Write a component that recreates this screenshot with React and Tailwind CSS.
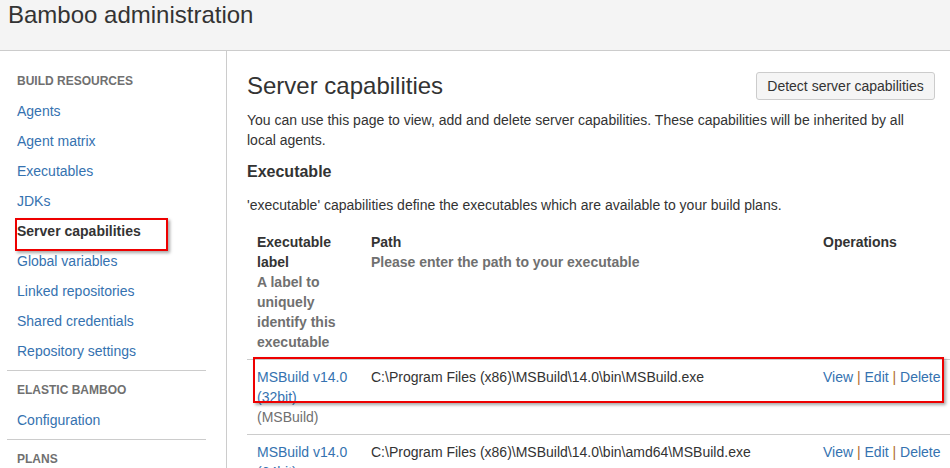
import React from "react";

const navLink = "h-[30px] flex items-center pl-[10px] text-[14px] text-[#3572b0]";
const navHead = "h-[30px] flex items-center pl-[10px] text-[12px] font-bold text-[#707070] uppercase";

function Sep() {
  return <span className="text-[#b06a2a]"> | </span>;
}

function Ops() {
  return (
    <span className="text-[#3572b0] whitespace-nowrap">
      View<Sep />Edit<Sep />Delete
    </span>
  );
}

export default function App() {
  return (
    <div
      className="relative w-[950px] h-[468px] overflow-hidden bg-white text-[#333] text-[14px] leading-[20px]"
      style={{ fontFamily: '"Liberation Sans", Arial, sans-serif' }}
    >
      <header className="h-[51px] bg-[#f4f4f4] border-b border-[#cccccc] pl-[8px] pt-[1px]">
        <h1 className="text-[24px] leading-[28px] text-[#333]">Bamboo administration</h1>
      </header>

      <div className="flex">
        <aside className="w-[227px] shrink-0 border-r border-[#cccccc] h-[417px] pt-[15px] pl-[7px] pr-[20px]">
          <div className={navHead}>Build resources</div>
          <div className={navLink}>Agents</div>
          <div className={navLink}>Agent matrix</div>
          <div className={navLink}>Executables</div>
          <div className={navLink}>JDKs</div>
          <div className="h-[30px] flex items-center pl-[10px] text-[14px] font-bold text-[#333]">
            Server capabilities
          </div>
          <div className={navLink}>Global variables</div>
          <div className={navLink}>Linked repositories</div>
          <div className={navLink}>Shared credentials</div>
          <div className={navLink}>Repository settings</div>
          <div className="border-t border-[#cccccc] mt-[4px] mb-[4px]" />
          <div className={navHead}>Elastic Bamboo</div>
          <div className={navLink}>Configuration</div>
          <div className="border-t border-[#cccccc] mt-[4px] mb-[4px]" />
          <div className={navHead}>Plans</div>
        </aside>

        <main className="flex-1 pl-[20px] pt-[21px] min-w-0">
          <div className="w-[688px] flex items-center justify-between h-[28px]">
            <h2 className="text-[24px] leading-[28px] text-[#333]">Server capabilities</h2>
            <button className="h-[28px] w-[179px] bg-[#f5f5f5] border border-[#cccccc] rounded-[3px] text-[14px] text-[#333]">
              Detect server capabilities
            </button>
          </div>
          <p className="w-[688px] mt-[10px]">
            You can use this page to view, add and delete server capabilities. These capabilities will be inherited by all
            local agents.
          </p>
          <h3 className="mt-[12px] text-[16px] leading-[20px] font-bold">Executable</h3>
          <p className="mt-[13px]">'executable' capabilities define the executables which are available to your build plans.</p>

          <table className="mt-[10px] w-[703px] border-collapse table-fixed">
            <colgroup>
              <col className="w-[114px]" />
              <col className="w-[452px]" />
              <col />
            </colgroup>
            <thead>
              <tr className="border-b border-[#cccccc] align-top text-left">
                <th className="px-[10px] pt-[7px] pb-[7px] font-bold">
                  <div>Executable label</div>
                  <div className="text-[#707070]">A label to uniquely identify this executable</div>
                </th>
                <th className="px-[10px] pt-[7px] pb-[7px] font-bold">
                  <div>Path</div>
                  <div className="text-[#707070]">Please enter the path to your executable</div>
                </th>
                <th className="px-[10px] pt-[7px] pb-[7px] font-bold">Operations</th>
              </tr>
            </thead>
            <tbody>
              <tr className="border-b border-[#cccccc] align-top">
                <td className="px-[10px] pt-[7px] pb-[7px]">
                  <div className="text-[#3572b0]">MSBuild v14.0 (32bit)</div>
                  <div className="text-[#707070]">(MSBuild)</div>
                </td>
                <td className="px-[10px] pt-[7px] pb-[7px]">C:\Program Files (x86)\MSBuild\14.0\bin\MSBuild.exe</td>
                <td className="px-[10px] pt-[7px] pb-[7px]"><Ops /></td>
              </tr>
              <tr className="border-b border-[#cccccc] align-top">
                <td className="px-[10px] pt-[7px] pb-[7px]">
                  <div className="text-[#3572b0]">MSBuild v14.0 (64bit)</div>
                  <div className="text-[#707070]">(MSBuild)</div>
                </td>
                <td className="px-[10px] pt-[7px] pb-[7px]">C:\Program Files (x86)\MSBuild\14.0\bin\amd64\MSBuild.exe</td>
                <td className="px-[10px] pt-[7px] pb-[7px]"><Ops /></td>
              </tr>
            </tbody>
          </table>
        </main>
      </div>

      {/* annotation highlight boxes */}
      <div className="absolute left-[15px] top-[218px] w-[153px] h-[33px] border-2 border-[#ee0000] shadow-[2px_2px_3px_rgba(0,0,0,0.35)]" />
      <div className="absolute left-[253px] top-[357px] w-[691px] h-[46px] border-2 border-[#ee0000] shadow-[2px_2px_3px_rgba(0,0,0,0.35)]" />
    </div>
  );
}
